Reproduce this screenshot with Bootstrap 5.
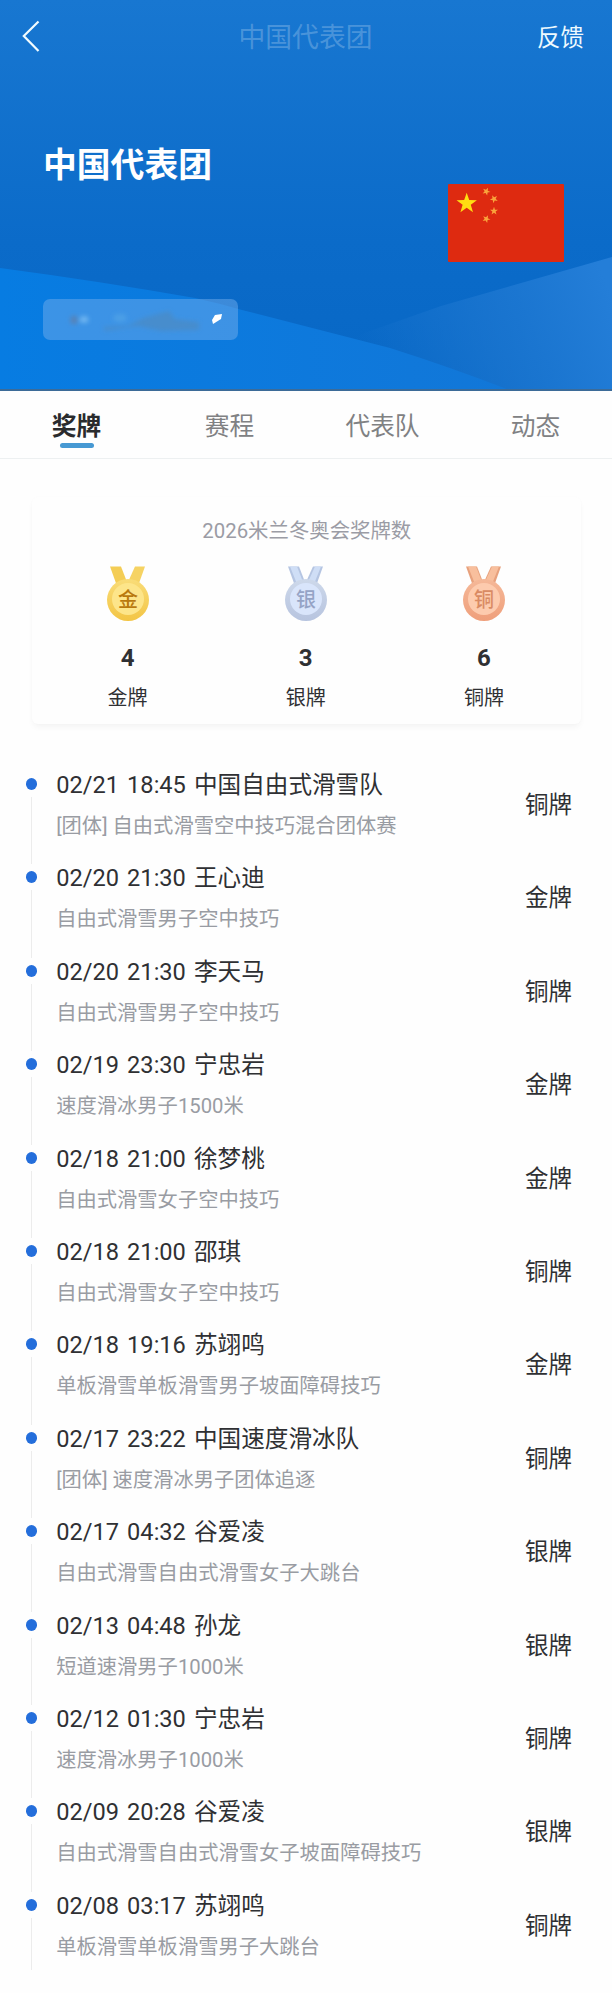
<!DOCTYPE html>
<html lang="zh-CN">
<head>
<meta charset="utf-8">
<meta name="viewport" content="width=device-width, initial-scale=1">
<title>中国代表团</title>
<link href="https://cdn.jsdelivr.net/npm/bootstrap@5.3.0/dist/css/bootstrap.min.css" rel="stylesheet">
<style>
  body { font-family: Roboto, "Noto Sans CJK SC", sans-serif; color: #2f3033; background: #fefefe; }
  .hero { height: 391px; background: linear-gradient(#1877d1, #0b6bc9 62%, #0767c5 100%); color: #fff; }
  .hero-bg { z-index: 0; }
  .hero-body { z-index: 1; }
  .topbar { height: 75px; padding: 0 28px 0 22px; }
  .bar-side { width: 90px; }
  .bar-title { font-size: 26.8px; color: rgba(255,255,255,.23); padding: 2px 0 0 5px; }
  .bar-link { font-size: 23.5px; color: #eefaff; padding-top: 2px; }
  .team-name { font-size: 33.8px; line-height: 44px; padding: 69px 0 0 43px; }
  .flag { width: 116px; height: 78px; margin: 109px 48px 0 0; }
  .pill { width: 195px; height: 41px; margin: 37px 0 0 43px; border-radius: 7px; background: rgba(112,172,236,.5); }
  .tabs { height: 68px; border-bottom: 1px solid #edf0f1; font-size: 24.7px; line-height: 32px; }
  .tab-item { color: #808183; padding-top: 20px; }
  .tab-item.active { color: #2a2b2d; font-weight: 700; }
  .tab-mark { width: 34px; height: 5px; border-radius: 3px; background: #4799d3; }
  .medal-card { margin: 38px 31px 0 32px; height: 227px; border: 0; border-radius: 6px; background: #fefefe; box-shadow: 0 4px 6px -1px rgba(0,0,0,.045), 0 0 3px rgba(0,0,0,.015); padding: 20px 8px 0 6.500px; }
  .card-head { font-size: 20.4px; line-height: 28px; color: #9b9ca5; padding-left: 2px; }
  .medal-svg { width: 50px; height: 60px; margin-top: 20px; }
  .medal-svg text { font-family: "Noto Sans CJK SC", sans-serif; font-size: 20px; }
  .count { font-size: 24px; line-height: 30px; margin-top: 18px; }
  .kind { font-size: 20px; line-height: 26px; margin-top: 12px; }
  .timeline { padding: 44px 40px 0 25.5px; }
  .event { height: 93.4px; }
  .rail { width: 12px; padding-top: 10px; margin-right: 18.700px; }
  .dot { width: 11.5px; height: 12px; border-radius: 50%; background: #246edb; }
  .rail-line { width: 1px; margin: 7px 0 -3px; background: #ececec; }
  .event:last-child .rail-line { margin-bottom: 12px; }
  .ev-title { font-size: 23.6px; line-height: 32px; white-space: nowrap; word-spacing: 2.300px; padding-top: 1px; }
  .ev-sub { font-size: 20.3px; line-height: 28px; margin-top: 11px; color: #999ca3; white-space: nowrap; }
  .ev-medal { font-size: 23.5px; line-height: 32px; margin-top: 21px; }
</style>
</head>
<body>
<header class="hero position-relative overflow-hidden">
  <svg class="hero-bg position-absolute top-0 start-0" width="612" height="391" viewBox="0 0 612 391">
    <defs>
      <linearGradient id="lw" x1="0" x2="1"><stop offset="0" stop-color="#077ce2"/><stop offset="1" stop-color="#1277d8"/></linearGradient>
      <linearGradient id="rw" x1="0" x2="1" y1=".5" y2=".3"><stop offset="0" stop-color="#1c76d0" stop-opacity="0"/><stop offset=".5" stop-color="#1c76d0" stop-opacity=".75"/><stop offset="1" stop-color="#247ed8"/></linearGradient>
    </defs>
    <path d="M612 257L441 306L350 338L500 391H612Z" fill="url(#rw)"/>
    <path d="M0 268Q98 281 195 298Q218 303 242 310L390 348Q450 367 512 391H0Z" fill="url(#lw)"/>
    <rect y="389" width="612" height="2" fill="#3c6b98"/>
  </svg>
  <div class="hero-body position-relative">
    <nav class="topbar d-flex align-items-center justify-content-between">
      <div class="bar-side d-flex pb-1">
        <svg width="18" height="32" viewBox="0 0 18 32" fill="none" stroke="#f2fcff" stroke-width="2.2"><path d="M16.500 1.500L1.800 16L16.500 31"/></svg>
      </div>
      <div class="bar-title">中国代表团</div>
      <div class="bar-side bar-link text-end">反馈</div>
    </nav>
    <div class="d-flex justify-content-between align-items-start">
      <h1 class="team-name fw-bold m-0">中国代表团</h1>
      <svg class="flag" viewBox="0 0 116 78">
        <defs><path id="star" d="M0-10L2.350-3.230L9.510-3.090L3.800 1.240L5.880 8.090L0 4L-5.880 8.090L-3.800 1.240L-9.510-3.090L-2.350-3.230Z"/></defs>
        <rect width="116" height="78" rx="1" fill="#de2a10"/>
        <use href="#star" transform="translate(18.700 19.500) scale(1.070)" fill="#ffde12"/>
        <g fill="#f9a43c">
          <use href="#star" transform="translate(38.300 7.500) rotate(24) scale(.42)"/>
          <use href="#star" transform="translate(46 15) rotate(45) scale(.42)"/>
          <use href="#star" transform="translate(46 27) scale(.42)"/>
          <use href="#star" transform="translate(38.300 35) rotate(24) scale(.42)"/>
        </g>
      </svg>
    </div>
    <div class="pill">
      <svg width="195" height="41" viewBox="0 0 195 41">
        <defs><filter id="soft" x="-50%" y="-50%" width="200%" height="200%"><feGaussianBlur stdDeviation="2.200"/></filter><filter id="soft2" x="-50%" y="-50%" width="200%" height="200%"><feGaussianBlur stdDeviation=".7"/></filter></defs>
        <g filter="url(#soft)">
          <ellipse cx="31" cy="21" rx="4" ry="4.500" fill="#5484bb"/>
          <ellipse cx="41" cy="20.500" rx="4.500" ry="3.500" fill="#6db4f0"/>
          <ellipse cx="77" cy="19" rx="7" ry="4" fill="#4c9fe6"/>
          <path d="M60 28L85 27L100 19L126 12L132 20L156 23V31L118 32L95 27L62 32Z" fill="#4a8bc6" opacity=".75"/>
        </g>
        <path d="M172 16L179 15L178 20L170 25L169 21Z" fill="#fff" filter="url(#soft2)"/>
      </svg>
    </div>
  </div>
</header>

<nav class="tabs row g-0 text-center">
  <div class="col tab-item active">奖牌<div class="tab-mark mx-auto"></div></div>
  <div class="col tab-item">赛程</div>
  <div class="col tab-item">代表队</div>
  <div class="col tab-item">动态</div>
</nav>

<main>
  <section class="card medal-card text-center">
    <div class="card-head">2026米兰冬奥会奖牌数</div>
    <div class="row g-0">
      <div class="col">
        <svg class="medal-svg d-block mx-auto" viewBox="0 0 50 60">
          <defs><linearGradient id="g1" x2="0" y2="1"><stop stop-color="#f9dc78"/><stop offset="1" stop-color="#f3c545"/></linearGradient></defs>
          <path d="M7 1.500H18L24 17L14 21Z" fill="#f4cd55"/><path d="M42 1.500H32L25 17L35 21Z" fill="#f6d363"/>
          <circle cx="25" cy="35" r="21" fill="url(#g1)"/><circle cx="25" cy="34" r="16" fill="#fde58a"/>
          <text x="25" y="41.500" text-anchor="middle" font-weight="500" fill="#b9790e">金</text>
        </svg>
        <div class="count fw-bold">4</div><div class="kind">金牌</div>
      </div>
      <div class="col">
        <svg class="medal-svg d-block mx-auto" viewBox="0 0 50 60">
          <defs><linearGradient id="g2" x2="0" y2="1"><stop stop-color="#cdd8ea"/><stop offset="1" stop-color="#b7c4df"/></linearGradient></defs>
          <path d="M7 1.500H18L24 17L14 21Z" fill="#b5c5e2"/><path d="M42 1.500H32L25 17L35 21Z" fill="#b5c5e2"/>
          <path d="M9 1.500H16L22 17L16 19Z" fill="#cfdef6"/><path d="M40 1.500H34L27 17L33 19Z" fill="#cfdef6"/>
          <circle cx="25" cy="35" r="21" fill="url(#g2)"/><circle cx="25" cy="34" r="16" fill="#d9e5fb"/>
          <text x="25" y="41.500" text-anchor="middle" font-weight="500" fill="#95a3c5">银</text>
        </svg>
        <div class="count fw-bold">3</div><div class="kind">银牌</div>
      </div>
      <div class="col">
        <svg class="medal-svg d-block mx-auto" viewBox="0 0 50 60">
          <defs><linearGradient id="g3" x2="0" y2="1"><stop stop-color="#f5b898"/><stop offset="1" stop-color="#ef9f7b"/></linearGradient></defs>
          <path d="M7 1.500H18L24 17L14 21Z" fill="#e7a17d"/><path d="M42 1.500H32L25 17L35 21Z" fill="#e7a17d"/>
          <path d="M9 1.500H17L23 17L16 19Z" fill="#f8bf9d"/><path d="M40 1.500H33L26 17L33 19Z" fill="#f8bf9d"/>
          <circle cx="25" cy="35" r="21" fill="url(#g3)"/><circle cx="25" cy="34" r="16" fill="#fdcbae"/>
          <text x="25" y="41.500" text-anchor="middle" font-weight="500" fill="#d98a63">铜</text>
        </svg>
        <div class="count fw-bold">6</div><div class="kind">铜牌</div>
      </div>
    </div>
  </section>

  <section class="timeline">
    <div class="event d-flex"><div class="rail d-flex flex-column align-items-center"><span class="dot"></span><span class="rail-line flex-grow-1"></span></div><div class="flex-grow-1"><div class="ev-title">02/21 18:45 中国自由式滑雪队</div><div class="ev-sub">[团体] 自由式滑雪空中技巧混合团体赛</div></div><div class="ev-medal">铜牌</div></div>
    <div class="event d-flex"><div class="rail d-flex flex-column align-items-center"><span class="dot"></span><span class="rail-line flex-grow-1"></span></div><div class="flex-grow-1"><div class="ev-title">02/20 21:30 王心迪</div><div class="ev-sub">自由式滑雪男子空中技巧</div></div><div class="ev-medal">金牌</div></div>
    <div class="event d-flex"><div class="rail d-flex flex-column align-items-center"><span class="dot"></span><span class="rail-line flex-grow-1"></span></div><div class="flex-grow-1"><div class="ev-title">02/20 21:30 李天马</div><div class="ev-sub">自由式滑雪男子空中技巧</div></div><div class="ev-medal">铜牌</div></div>
    <div class="event d-flex"><div class="rail d-flex flex-column align-items-center"><span class="dot"></span><span class="rail-line flex-grow-1"></span></div><div class="flex-grow-1"><div class="ev-title">02/19 23:30 宁忠岩</div><div class="ev-sub">速度滑冰男子1500米</div></div><div class="ev-medal">金牌</div></div>
    <div class="event d-flex"><div class="rail d-flex flex-column align-items-center"><span class="dot"></span><span class="rail-line flex-grow-1"></span></div><div class="flex-grow-1"><div class="ev-title">02/18 21:00 徐梦桃</div><div class="ev-sub">自由式滑雪女子空中技巧</div></div><div class="ev-medal">金牌</div></div>
    <div class="event d-flex"><div class="rail d-flex flex-column align-items-center"><span class="dot"></span><span class="rail-line flex-grow-1"></span></div><div class="flex-grow-1"><div class="ev-title">02/18 21:00 邵琪</div><div class="ev-sub">自由式滑雪女子空中技巧</div></div><div class="ev-medal">铜牌</div></div>
    <div class="event d-flex"><div class="rail d-flex flex-column align-items-center"><span class="dot"></span><span class="rail-line flex-grow-1"></span></div><div class="flex-grow-1"><div class="ev-title">02/18 19:16 苏翊鸣</div><div class="ev-sub">单板滑雪单板滑雪男子坡面障碍技巧</div></div><div class="ev-medal">金牌</div></div>
    <div class="event d-flex"><div class="rail d-flex flex-column align-items-center"><span class="dot"></span><span class="rail-line flex-grow-1"></span></div><div class="flex-grow-1"><div class="ev-title">02/17 23:22 中国速度滑冰队</div><div class="ev-sub">[团体] 速度滑冰男子团体追逐</div></div><div class="ev-medal">铜牌</div></div>
    <div class="event d-flex"><div class="rail d-flex flex-column align-items-center"><span class="dot"></span><span class="rail-line flex-grow-1"></span></div><div class="flex-grow-1"><div class="ev-title">02/17 04:32 谷爱凌</div><div class="ev-sub">自由式滑雪自由式滑雪女子大跳台</div></div><div class="ev-medal">银牌</div></div>
    <div class="event d-flex"><div class="rail d-flex flex-column align-items-center"><span class="dot"></span><span class="rail-line flex-grow-1"></span></div><div class="flex-grow-1"><div class="ev-title">02/13 04:48 孙龙</div><div class="ev-sub">短道速滑男子1000米</div></div><div class="ev-medal">银牌</div></div>
    <div class="event d-flex"><div class="rail d-flex flex-column align-items-center"><span class="dot"></span><span class="rail-line flex-grow-1"></span></div><div class="flex-grow-1"><div class="ev-title">02/12 01:30 宁忠岩</div><div class="ev-sub">速度滑冰男子1000米</div></div><div class="ev-medal">铜牌</div></div>
    <div class="event d-flex"><div class="rail d-flex flex-column align-items-center"><span class="dot"></span><span class="rail-line flex-grow-1"></span></div><div class="flex-grow-1"><div class="ev-title">02/09 20:28 谷爱凌</div><div class="ev-sub">自由式滑雪自由式滑雪女子坡面障碍技巧</div></div><div class="ev-medal">银牌</div></div>
    <div class="event d-flex"><div class="rail d-flex flex-column align-items-center"><span class="dot"></span><span class="rail-line flex-grow-1"></span></div><div class="flex-grow-1"><div class="ev-title">02/08 03:17 苏翊鸣</div><div class="ev-sub">单板滑雪单板滑雪男子大跳台</div></div><div class="ev-medal">铜牌</div></div>
  </section>
</main>
<script src="https://cdn.jsdelivr.net/npm/bootstrap@5.3.0/dist/js/bootstrap.bundle.min.js"></script>
</body>
</html>
